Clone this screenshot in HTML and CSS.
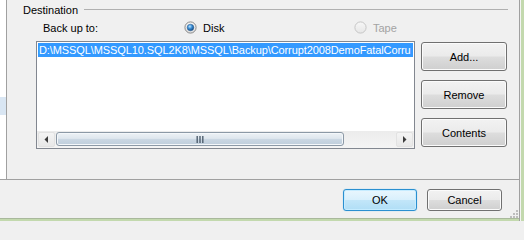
FILE: index.html
```html
<!DOCTYPE html>
<html>
<head>
<meta charset="utf-8">
<link rel="stylesheet" href="styles.css">
</head>
<body>
<div class="screen">
  <div class="dialog">
    <div class="main">
      <div class="left-strip"><div class="strip-sel"></div></div>
      <div class="content">
        <div class="dest-head">
          <span class="dest-label">Destination</span>
          <span class="dest-line"></span>
        </div>
        <div class="backup-row">
          <span class="backup-label">Back up to:</span>
          <span class="option opt-disk">
            <svg class="radio" width="13" height="13" viewBox="0 0 13 13">
              <defs>
                <linearGradient id="ring" x1="0" y1="0" x2="0" y2="1">
                  <stop offset="0" stop-color="#f5f5f5"/>
                  <stop offset="1" stop-color="#dcdcdc"/>
                </linearGradient>
                <radialGradient id="dot" cx="0.4" cy="0.35" r="0.7">
                  <stop offset="0" stop-color="#bfe6ff"/>
                  <stop offset="0.45" stop-color="#3b8fd6"/>
                  <stop offset="1" stop-color="#0f3f75"/>
                </radialGradient>
              </defs>
              <circle cx="6.5" cy="6.5" r="5.6" fill="url(#ring)" stroke="#8a8a8a" stroke-width="1"/>
              <circle cx="6.5" cy="6.5" r="3.3" fill="url(#dot)" stroke="#2a5f93" stroke-width="0.5"/>
            </svg>
            <span class="opt-text">Disk</span>
          </span>
          <span class="option opt-tape">
            <svg class="radio" width="13" height="13" viewBox="0 0 13 13">
              <defs>
                <linearGradient id="ringd" x1="0" y1="0" x2="0" y2="1">
                  <stop offset="0" stop-color="#f7f7f7"/>
                  <stop offset="1" stop-color="#e6e6e6"/>
                </linearGradient>
              </defs>
              <circle cx="6.5" cy="6.5" r="5.6" fill="url(#ringd)" stroke="#c6c6c6" stroke-width="1"/>
            </svg>
            <span class="opt-text disabled">Tape</span>
          </span>
        </div>
        <div class="list-row">
          <div class="listbox">
            <div class="items">
              <div class="item selected">D:\MSSQL\MSSQL10.SQL2K8\MSSQL\Backup\Corrupt2008DemoFatalCorru</div>
            </div>
            <div class="hscroll">
              <div class="sb-btn">
                <svg width="7" height="9" viewBox="0 0 7 9"><path d="M5 1 L1.5 4.5 L5 8 Z" fill="#3c3c3c"/></svg>
              </div>
              <div class="sb-track">
                <div class="sb-thumb">
                  <svg width="8" height="7" viewBox="0 0 8 7">
                    <rect x="0.5" y="0" width="1.4" height="7" fill="#4f5f6e"/>
                    <rect x="3.3" y="0" width="1.4" height="7" fill="#4f5f6e"/>
                    <rect x="6.1" y="0" width="1.4" height="7" fill="#4f5f6e"/>
                  </svg>
                </div>
              </div>
              <div class="sb-btn">
                <svg width="7" height="9" viewBox="0 0 7 9"><path d="M2 1 L5.5 4.5 L2 8 Z" fill="#3c3c3c"/></svg>
              </div>
            </div>
          </div>
          <div class="side-buttons">
            <button class="btn">Add...</button>
            <button class="btn">Remove</button>
            <button class="btn">Contents</button>
          </div>
        </div>
      </div>
    </div>
    <div class="footer">
      <button class="btn btn-ok">OK</button>
      <button class="btn btn-cancel">Cancel</button>
      <svg class="grip" width="9" height="9" viewBox="0 0 9 9">
        <rect x="7" y="1" width="2" height="2" fill="#bdbdbd"/>
        <rect x="4" y="4" width="2" height="2" fill="#bdbdbd"/>
        <rect x="7" y="4" width="2" height="2" fill="#bdbdbd"/>
        <rect x="1" y="7" width="2" height="2" fill="#bdbdbd"/>
        <rect x="4" y="7" width="2" height="2" fill="#bdbdbd"/>
        <rect x="7" y="7" width="2" height="2" fill="#bdbdbd"/>
      </svg>
    </div>
    <div class="bottom-edge"></div>
  </div>
  <div class="edge-gap"></div>
  <div class="edge-green"></div>
</div>
</body>
</html>
```

FILE: styles.css
```css
* { box-sizing: border-box; }
html, body {
  margin: 0;
  padding: 0;
  background: #f0f0f0;
}
body {
  font-family: "Liberation Sans", Arial, sans-serif;
  font-size: 11px;
  line-height: 13px;
  color: #000;
}
.screen {
  width: 524px;
  height: 221px;
  display: flex;
  overflow: hidden;
}
.dialog {
  width: 520px;
  height: 221px;
  display: flex;
  flex-direction: column;
  border-right: 1px solid #a0a0a0;
  background: #f0f0f0;
}
.edge-gap {
  width: 1px;
  background: #f4f4f4;
}
.edge-green {
  width: 3px;
  background: #c3d9ae;
}
.main {
  height: 180px;
  display: flex;
  border-bottom: 1px solid #a0a0a0;
}
.left-strip {
  width: 7px;
  background: #ffffff;
  border-right: 1px solid #a0a0a0;
}
.strip-sel {
  margin-top: 97px;
  height: 18px;
  background: #d9e6f3;
}
.content {
  flex: 1;
  display: flex;
  flex-direction: column;
}
.dest-head {
  display: flex;
  align-items: flex-start;
  padding: 4px 11px 0 16px;
}
.dest-line {
  flex: 1;
  height: 1px;
  margin-top: 5px;
  margin-left: 6px;
  background: #b0b0b0;
}
.backup-row {
  display: flex;
  height: 13px;
  margin-top: 5px;
  padding-left: 36px;
}
.backup-label {
  width: 141px;
}
.option {
  display: flex;
  align-items: flex-start;
}
.opt-disk {
  width: 170px;
}
.radio {
  margin-top: -1px;
  flex: none;
}
.opt-text {
  margin-left: 6px;
}
.opt-text.disabled {
  color: #a3a3a3;
}
.list-row {
  display: flex;
  margin-top: 6px;
  padding-left: 29px;
  gap: 6px;
}
.listbox {
  width: 379px;
  height: 108px;
  border: 1px solid #828790;
  background: #ffffff;
  display: flex;
  flex-direction: column;
}
.items {
  flex: 1;
  padding: 1px 1px 0 1px;
  overflow: hidden;
}
.item {
  height: 14px;
  line-height: 14px;
  padding-left: 1px;
  white-space: nowrap;
  overflow: hidden;
  letter-spacing: -0.1px;
}
.item.selected {
  background: #3399ff;
  color: #ffffff;
}
.hscroll {
  height: 17px;
  display: flex;
  align-items: stretch;
  background: linear-gradient(#ececec, #f4f4f4);
}
.sb-btn {
  width: 17px;
  margin: 1px 0 1px 1px;
  border: 1px solid #e2e2e2;
  border-radius: 2px;
  background: linear-gradient(#f4f4f4, #e8e8e8);
  display: flex;
  align-items: center;
  justify-content: center;
}
.sb-btn:last-child {
  margin: 1px 1px 1px 0;
}
.sb-track {
  flex: 1;
  display: flex;
  padding: 1px 52px 2px 1px;
}
.sb-thumb {
  flex: 1;
  border: 1px solid #8c99a6;
  border-radius: 3px;
  background: linear-gradient(#eef2f6 0%, #dfe7ee 45%, #c9d6e2 55%, #bfcedb 100%);
  box-shadow: inset 0 0 0 1px #f4f7fa;
  display: flex;
  align-items: center;
  justify-content: center;
}
.side-buttons {
  width: 86px;
  display: flex;
  flex-direction: column;
  gap: 9px;
  margin-top: 1px;
}
.btn {
  font-family: "Liberation Sans", Arial, sans-serif;
  font-size: 11px;
  color: #000;
  height: 29px;
  padding: 0;
  border: 1px solid #707070;
  border-radius: 3px;
  background: linear-gradient(#f2f2f2 0%, #ebebeb 48%, #dddddd 52%, #cfcfcf 100%);
  box-shadow: inset 0 0 0 1px #fbfbfb;
}
.footer {
  height: 38px;
  display: flex;
  justify-content: flex-end;
  align-items: flex-start;
  padding-top: 9px;
}
.btn-ok, .btn-cancel {
  height: 22px;
}
.btn-ok {
  width: 74px;
  border-color: #2a8fd0;
  background: linear-gradient(#e9f6fd 0%, #d9f0fc 48%, #c2e6f9 52%, #b0def6 100%);
  box-shadow: inset 0 0 0 1px #c6ecff, 0 0 1px #6cc4f0;
}
.btn-cancel {
  width: 75px;
  margin-left: 10px;
}
.grip {
  align-self: flex-end;
  margin-left: 7px;
  margin-right: 1px;
  margin-bottom: 0;
}
.bottom-edge {
  height: 3px;
  border-top: 1px solid #a9b99c;
  background: #c3d9ae;
}
```
